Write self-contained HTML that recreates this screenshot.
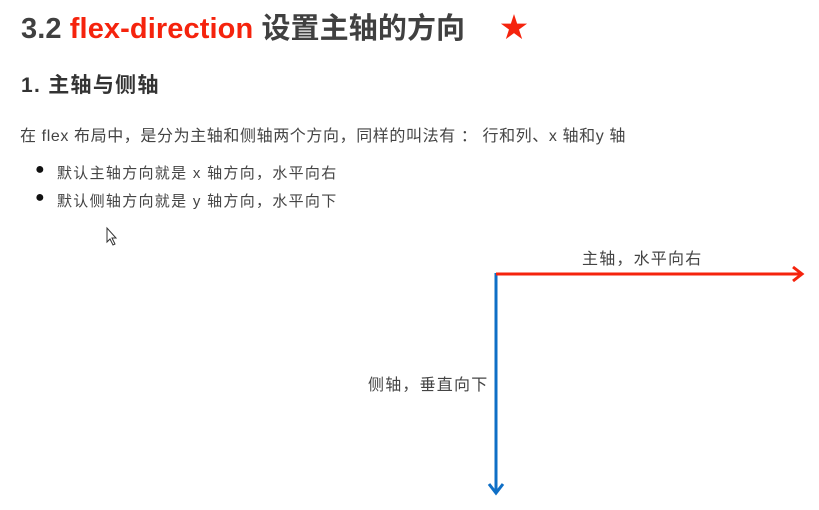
<!DOCTYPE html>
<html><head><meta charset="utf-8"><style>
body{margin:0;width:819px;height:510px;background:#fff;position:relative;overflow:hidden;font-family:"Liberation Sans","Noto Sans CJK SC",sans-serif;color:#333}
.t{position:absolute;white-space:nowrap}
</style></head><body>
<div class="t" style="left:21px;top:5px;font-size:29px;font-weight:bold;color:#404040;letter-spacing:0.1px">3.2 <span style="color:#f5230d">flex-direction</span> 设置主轴的方向</div>
<div class="t" style="left:500px;top:6px;font-size:28px;color:#f5230d">★</div>
<div class="t" style="left:21px;top:69px;font-size:21px;font-weight:bold;color:#333;letter-spacing:1.3px">1. 主轴与侧轴</div>
<div class="t" style="left:20px;top:122px;font-size:16px;color:#444;letter-spacing:0.6px">在 flex 布局中，是分为主轴和侧轴两个方向，同样的叫法有 ： 行和列、x 轴和y 轴</div>
<div class="t" style="left:35px;top:161px;font-size:16px;color:#111">●</div>
<div class="t" style="left:57px;top:162px;font-size:15px;color:#444;letter-spacing:1.3px">默认主轴方向就是 x 轴方向，水平向右</div>
<div class="t" style="left:35px;top:189px;font-size:16px;color:#111">●</div>
<div class="t" style="left:57px;top:190px;font-size:15px;color:#444;letter-spacing:1.3px">默认侧轴方向就是 y 轴方向，水平向下</div>
<div class="t" style="left:582px;top:245px;font-size:16px;color:#444;letter-spacing:1.2px">主轴，水平向右</div>
<div class="t" style="left:368px;top:371px;font-size:16px;color:#444;letter-spacing:1.2px">侧轴，垂直向下</div>
<svg style="position:absolute;left:0;top:0" width="819" height="510">
<path d="M107 228 L107 242 L110 239 L113 245 L115 244 L112 238 L116 238 Z" fill="#fff" stroke="#333" stroke-width="1"/>
<line x1="496" y1="273" x2="496" y2="492" stroke="#0f6fc6" stroke-width="3"/>
<polyline points="489,484 496,493 503,484" fill="none" stroke="#0f6fc6" stroke-width="3"/>
<line x1="496" y1="274" x2="802" y2="274" stroke="#f5230d" stroke-width="3"/>
<polyline points="793,267 802,274 793,281" fill="none" stroke="#f5230d" stroke-width="3"/>
</svg>
</body></html>
